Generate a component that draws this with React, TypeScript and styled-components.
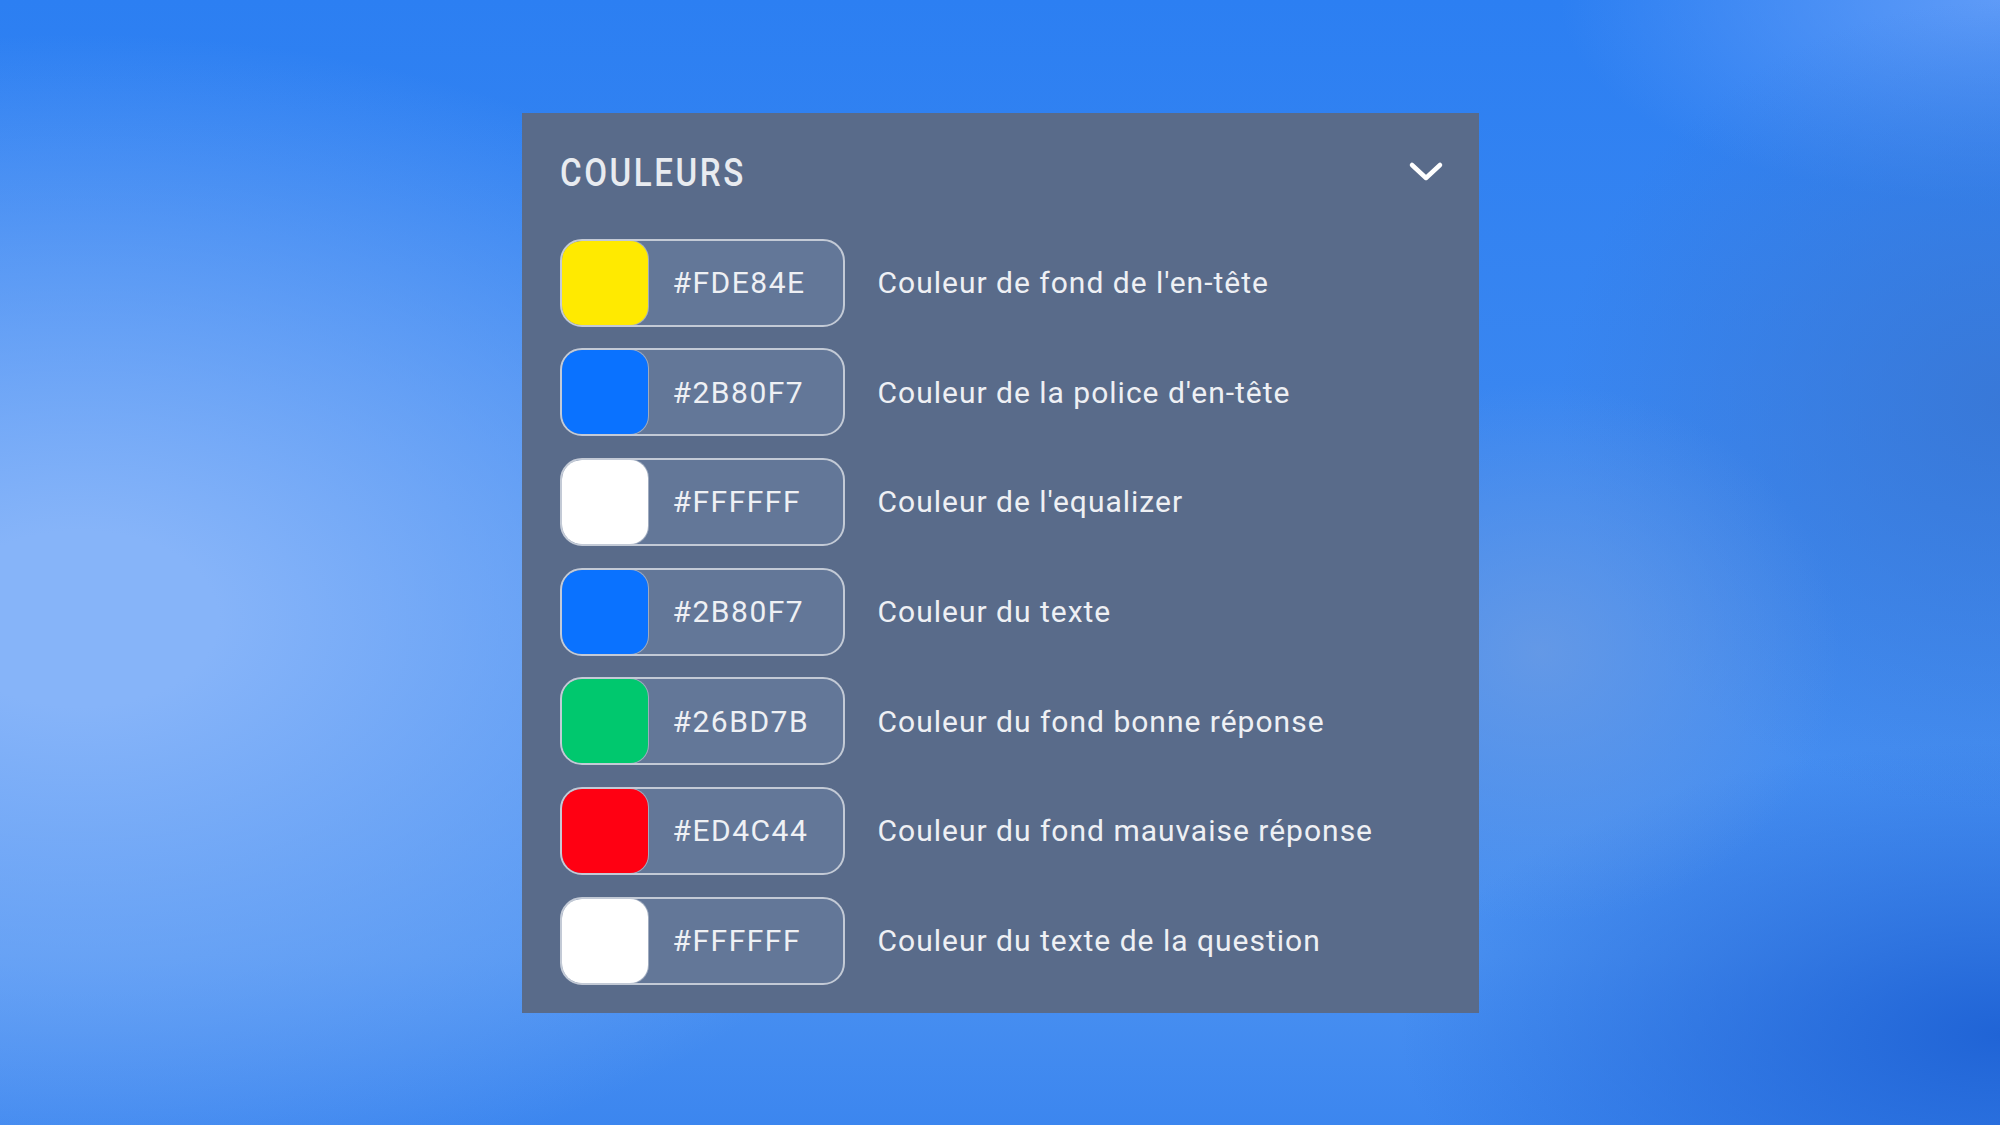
import * as React from 'react';
import styled, { createGlobalStyle } from 'styled-components';

const GlobalStyle = createGlobalStyle`
  html, body {
    margin: 0;
    padding: 0;
  }
  body {
    font-family: Roboto, "Liberation Sans", sans-serif;
  }
`;

const Page = styled.div`
  min-height: 100vh;
  display: flex;
  align-items: center;
  justify-content: center;
  background:
    radial-gradient(ellipse 46% 52% at 4% 55%, rgba(134, 180, 249, 1) 15%, rgba(134, 180, 249, 0) 100%),
    radial-gradient(ellipse 15% 24% at 77% 58%, rgba(108, 156, 228, 0.8), rgba(108, 156, 228, 0) 100%),
    radial-gradient(ellipse 22% 36% at 100% 36%, rgba(56, 118, 212, 0.85), rgba(56, 118, 212, 0) 100%),
    radial-gradient(ellipse 30% 26% at 100% 92%, rgba(32, 100, 214, 1), rgba(32, 100, 214, 0) 100%),
    radial-gradient(ellipse 22% 18% at 100% 0%, rgba(100, 158, 248, 0.9), rgba(100, 158, 248, 0) 100%),
    linear-gradient(180deg, #2c7ff2 0%, #3d88f0 45%, #4a91f1 85%, #3c86ef 100%);
`;

const Panel = styled.section`
  width: 957px;
  height: 900px;
  box-sizing: border-box;
  background: #596b8a;
  padding: 0 36px 0 38px;
  display: flex;
  flex-direction: column;
`;

const Header = styled.div`
  height: 120px;
  margin-bottom: 6px;
  display: flex;
  align-items: center;
  justify-content: space-between;
`;

const Title = styled.h2`
  margin: 0;
  font-family: Roboto, "Liberation Sans", sans-serif;
  font-weight: 500;
  font-size: 39px;
  letter-spacing: 3px;
  color: #e8ebf0;
  transform: scaleX(0.85);
  transform-origin: left center;
`;

const Chevron = styled.svg`
  width: 36px;
  height: 22px;
  margin-right: -1px;
  margin-top: -2px;
`;

const List = styled.div`
  display: flex;
  flex-direction: column;
  gap: 21.7px;
`;

const Row = styled.div`
  display: flex;
  align-items: center;
  gap: 33px;
`;

const Picker = styled.div`
  width: 285px;
  height: 88px;
  box-sizing: border-box;
  border: 2px solid #c3cad6;
  border-radius: 22px;
  background: #637798;
  display: flex;
  align-items: stretch;
  overflow: hidden;
`;

const Swatch = styled.div<{ $color: string }>`
  width: 86px;
  flex: none;
  background: ${(p) => p.$color};
  border-radius: 18px;
  box-shadow: 0 0 0 1px rgba(200, 206, 216, 0.6);
`;

const Hex = styled.span`
  padding-left: 25px;
  display: flex;
  align-items: center;
  font-size: 30px;
  letter-spacing: 1.5px;
  color: #eef0f4;
`;

const Label = styled.span`
  font-size: 30px;
  letter-spacing: 1px;
  color: #eef0f4;
`;

const colors = [
  { swatch: '#ffea00', hex: '#FDE84E', label: "Couleur de fond de l'en-tête" },
  { swatch: '#0a72ff', hex: '#2B80F7', label: "Couleur de la police d'en-tête" },
  { swatch: '#ffffff', hex: '#FFFFFF', label: "Couleur de l'equalizer" },
  { swatch: '#0a72ff', hex: '#2B80F7', label: 'Couleur du texte' },
  { swatch: '#00c86e', hex: '#26BD7B', label: 'Couleur du fond bonne réponse' },
  { swatch: '#ff0012', hex: '#ED4C44', label: 'Couleur du fond mauvaise réponse' },
  { swatch: '#ffffff', hex: '#FFFFFF', label: 'Couleur du texte de la question' },
];

export default function App() {
  return (
    <>
      <GlobalStyle />
      <Page>
        <Panel>
          <Header>
            <Title>COULEURS</Title>
            <Chevron viewBox="0 0 36 22" fill="none">
              <path d="M4 4 L18 17 L32 4" stroke="#ffffff" strokeWidth="4.5" strokeLinecap="round" strokeLinejoin="round" />
            </Chevron>
          </Header>
          <List>
            {colors.map((c, i) => (
              <Row key={i}>
                <Picker>
                  <Swatch $color={c.swatch} />
                  <Hex>{c.hex}</Hex>
                </Picker>
                <Label>{c.label}</Label>
              </Row>
            ))}
          </List>
        </Panel>
      </Page>
    </>
  );
}
